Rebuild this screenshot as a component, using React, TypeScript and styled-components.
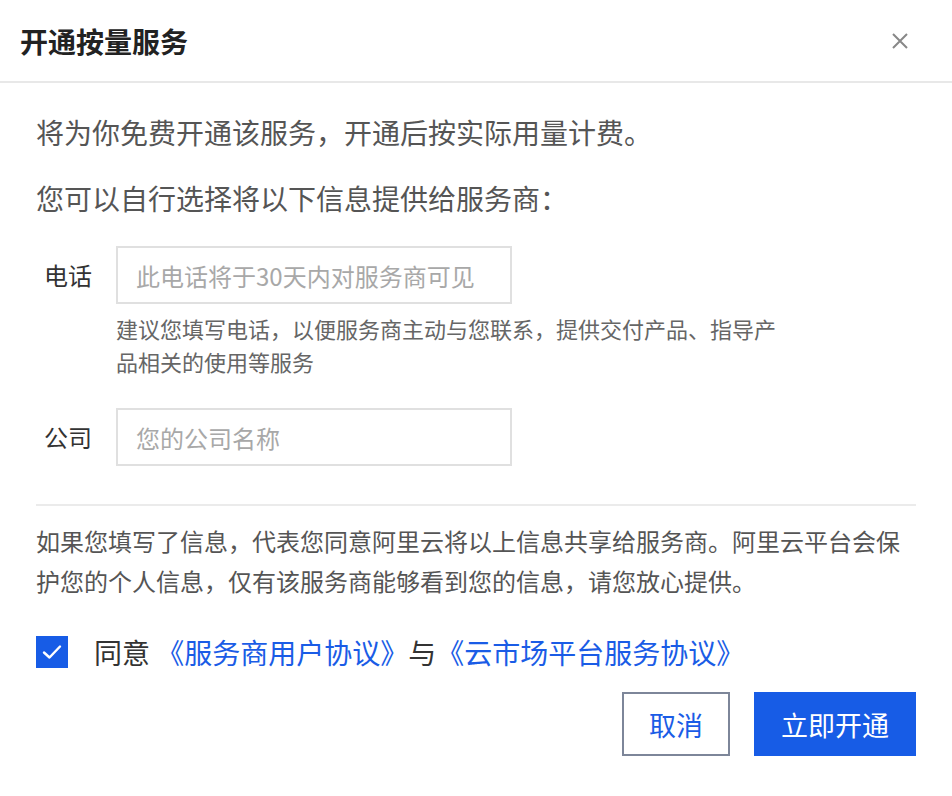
import React from "react";
import styled, { createGlobalStyle } from "styled-components";

const GlobalStyle = createGlobalStyle`
  * { box-sizing: border-box; }
  html, body { margin: 0; padding: 0; background: #ffffff; }
  body {
    font-family: "Noto Sans CJK SC", "Noto Sans", sans-serif;
    color: #333333;
  }
  input::placeholder { color: #a8a8a8; }
`;

const Dialog = styled.div`
  width: 952px;
  min-height: 796px;
  background: #ffffff;
  display: flex;
  flex-direction: column;
`;

const Header = styled.header`
  height: 83px;
  padding: 0 44px 0 20px;
  display: flex;
  align-items: center;
  justify-content: space-between;
  border-bottom: 2px solid #e8e8e8;
`;

const Title = styled.h1`
  margin: 0;
  font-size: 28px;
  line-height: 40px;
  font-weight: 700;
  color: #222222;
`;

const CloseButton = styled.button`
  width: 16px;
  height: 16px;
  padding: 0;
  border: none;
  background: none;
  display: flex;
  cursor: pointer;
`;

const Body = styled.div`
  padding: 29px 36px 0 36px;
  display: flex;
  flex-direction: column;
`;

const Lead = styled.p<{ $gap?: number }>`
  margin: ${(p) => p.$gap ?? 0}px 0 0 0;
  font-size: 28px;
  line-height: 40px;
  color: #555555;
`;

const FormRow = styled.div<{ $gap: number }>`
  margin-top: ${(p) => p.$gap}px;
  display: flex;
  align-items: center;
  gap: 24px;
`;

const Label = styled.label`
  width: 56px;
  text-align: right;
  font-size: 24px;
  line-height: 34px;
  color: #333333;
`;

const TextInput = styled.input`
  width: 396px;
  height: 58px;
  padding: 0 18px;
  border: 2px solid #e0e0e0;
  border-radius: 0;
  outline: none;
  font-family: inherit;
  font-size: 24px;
  color: #333333;
  background: #ffffff;
`;

const Hint = styled.p`
  margin: 8px 0 0 80px;
  max-width: 680px;
  font-size: 22px;
  line-height: 33px;
  color: #666666;
`;

const Divider = styled.hr`
  margin: 38px 0 0 0;
  border: none;
  border-top: 2px solid #ebebeb;
`;

const Notice = styled.p`
  margin: 15px 0 0 0;
  font-size: 24px;
  line-height: 40px;
  color: #555555;
`;

const AgreeRow = styled.div`
  margin-top: 31px;
  display: flex;
  align-items: center;
  gap: 26px;
`;

const CheckBox = styled.span`
  width: 32px;
  height: 32px;
  background: #175ce6;
  display: flex;
  align-items: center;
  justify-content: center;
  flex-shrink: 0;
`;

const AgreeText = styled.span`
  font-size: 28px;
  line-height: 40px;
  color: #333333;
  white-space: nowrap;
`;

const Link = styled.a`
  color: #1a5ce6;
  text-decoration: none;
`;

const Footer = styled.div`
  margin-top: 20px;
  display: flex;
  justify-content: flex-end;
  gap: 24px;
`;

const Button = styled.button<{ $primary?: boolean }>`
  height: 64px;
  padding: 0 25px;
  font-family: inherit;
  font-size: 27px;
  line-height: 1;
  border-radius: 0;
  cursor: pointer;
  border: 2px solid ${(p) => (p.$primary ? "#175ce6" : "#7d8699")};
  background: ${(p) => (p.$primary ? "#175ce6" : "#ffffff")};
  color: ${(p) => (p.$primary ? "#ffffff" : "#1a5ce6")};
`;

export default function App() {
  return (
    <>
      <GlobalStyle />
      <Dialog>
        <Header>
          <Title>开通按量服务</Title>
          <CloseButton aria-label="关闭">
            <svg width="16" height="16" viewBox="0 0 16 16">
              <path d="M1 1 L15 15 M15 1 L1 15" stroke="#888888" strokeWidth="2" />
            </svg>
          </CloseButton>
        </Header>
        <Body>
          <Lead>将为你免费开通该服务，开通后按实际用量计费。</Lead>
          <Lead $gap={26}>您可以自行选择将以下信息提供给服务商：</Lead>
          <FormRow $gap={28}>
            <Label>电话</Label>
            <TextInput placeholder="此电话将于30天内对服务商可见" />
          </FormRow>
          <Hint>建议您填写电话，以便服务商主动与您联系，提供交付产品、指导产品相关的使用等服务</Hint>
          <FormRow $gap={30}>
            <Label>公司</Label>
            <TextInput placeholder="您的公司名称" />
          </FormRow>
          <Divider />
          <Notice>
            如果您填写了信息，代表您同意阿里云将以上信息共享给服务商。阿里云平台会保护您的个人信息，仅有该服务商能够看到您的信息，请您放心提供。
          </Notice>
          <AgreeRow>
            <CheckBox>
              <svg width="20" height="16" viewBox="0 0 20 16">
                <path d="M2 8.5 L7.5 13.5 L18 2.5" stroke="#ffffff" strokeWidth="2.4" fill="none" strokeLinecap="round" strokeLinejoin="round" />
              </svg>
            </CheckBox>
            <AgreeText>
              同意 <Link href="#">《服务商用户协议》</Link>与<Link href="#">《云市场平台服务协议》</Link>
            </AgreeText>
          </AgreeRow>
          <Footer>
            <Button>取消</Button>
            <Button $primary>立即开通</Button>
          </Footer>
        </Body>
      </Dialog>
    </>
  );
}
